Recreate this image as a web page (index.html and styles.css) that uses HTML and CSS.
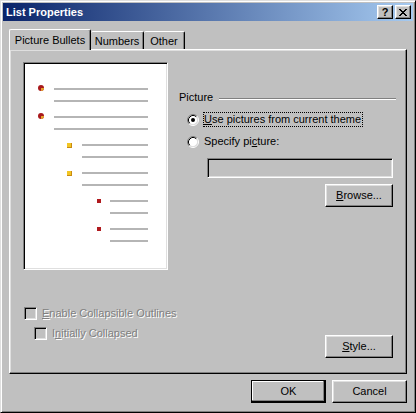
FILE: index.html
```html
<!DOCTYPE html>
<html>
<head>
<meta charset="utf-8">
<title>List Properties</title>
<link rel="stylesheet" href="styles.css">
</head>
<body>
<div class="window">
  <div class="titlebar">
    <span class="title">List Properties</span>
    <div class="title-buttons">
      <span class="tbtn help">?</span>
      <span class="tbtn close">
        <svg width="8" height="7" viewBox="0 0 8 7" shape-rendering="crispEdges"><path d="M0 0h2v1H0zM6 0h2v1H6zM1 1h2v1H1zM5 1h2v1H5zM2 2h4v1H2zM3 3h2v1H3zM2 4h4v1H2zM1 5h2v1H1zM5 5h2v1H5zM0 6h2v1H0zM6 6h2v1H6z" fill="#000"/></svg>
      </span>
    </div>
  </div>
  <div class="client">
    <div class="tabs">
      <div class="tab selected">Picture Bullets</div>
      <div class="tab tab-numbers">Numbers</div>
      <div class="tab tab-other">Other</div>
    </div>
    <div class="panel">
      <div class="top">
        <div class="preview">
          <div class="item lvl1">
            <svg class="bullet" width="6" height="6" viewBox="0 0 6 6"><circle cx="3" cy="3" r="3" fill="#a8191c"/><path d="M3 3H6A3 3 0 0 1 3 6Z" fill="#e4a22a"/></svg>
            <div class="lines"><div class="ln"></div><div class="ln"></div></div>
          </div>
          <div class="item lvl1">
            <svg class="bullet" width="6" height="6" viewBox="0 0 6 6"><circle cx="3" cy="3" r="3" fill="#a8191c"/><path d="M3 3H6A3 3 0 0 1 3 6Z" fill="#e4a22a"/></svg>
            <div class="lines"><div class="ln"></div><div class="ln"></div></div>
          </div>
          <div class="item lvl2">
            <svg class="bullet" width="5" height="5" viewBox="0 0 5 5" shape-rendering="crispEdges"><rect width="5" height="5" fill="#c98a12"/><rect width="4" height="4" fill="#f2c624"/></svg>
            <div class="lines"><div class="ln"></div><div class="ln"></div></div>
          </div>
          <div class="item lvl2">
            <svg class="bullet" width="5" height="5" viewBox="0 0 5 5" shape-rendering="crispEdges"><rect width="5" height="5" fill="#c98a12"/><rect width="4" height="4" fill="#f2c624"/></svg>
            <div class="lines"><div class="ln"></div><div class="ln"></div></div>
          </div>
          <div class="item lvl3">
            <svg class="bullet" width="4" height="4" viewBox="0 0 4 4" shape-rendering="crispEdges"><rect width="4" height="4" fill="#b01a1e"/></svg>
            <div class="lines"><div class="ln"></div><div class="ln"></div></div>
          </div>
          <div class="item lvl3">
            <svg class="bullet" width="4" height="4" viewBox="0 0 4 4" shape-rendering="crispEdges"><rect width="4" height="4" fill="#b01a1e"/></svg>
            <div class="lines"><div class="ln"></div><div class="ln"></div></div>
          </div>
        </div>
        <div class="picture-group">
          <div class="group-head"><span>Picture</span><span class="etch"></span></div>
          <div class="radio-row first">
            <svg class="radio" width="12" height="12" viewBox="0 0 12 12">
              <circle cx="6" cy="6" r="4.5" fill="#fff"/>
              <path d="M2.11 9.89A5.5 5.5 0 0 1 9.89 2.11" fill="none" stroke="#808080"/>
              <path d="M9.89 2.11A5.5 5.5 0 0 1 2.11 9.89" fill="none" stroke="#fff"/>
              <path d="M2.82 9.18A4.5 4.5 0 0 1 9.18 2.82" fill="none" stroke="#000"/>
              <path d="M9.18 2.82A4.5 4.5 0 0 1 2.82 9.18" fill="none" stroke="#dfdfdf"/>
              <circle cx="6" cy="6" r="2" fill="#000"/>
            </svg>
            <span class="label focus"><u>U</u>se pictures from current theme</span>
          </div>
          <div class="radio-row second">
            <svg class="radio" width="12" height="12" viewBox="0 0 12 12">
              <circle cx="6" cy="6" r="4.5" fill="#fff"/>
              <path d="M2.11 9.89A5.5 5.5 0 0 1 9.89 2.11" fill="none" stroke="#808080"/>
              <path d="M9.89 2.11A5.5 5.5 0 0 1 2.11 9.89" fill="none" stroke="#fff"/>
              <path d="M2.82 9.18A4.5 4.5 0 0 1 9.18 2.82" fill="none" stroke="#000"/>
              <path d="M9.18 2.82A4.5 4.5 0 0 1 2.82 9.18" fill="none" stroke="#dfdfdf"/>
            </svg>
            <span class="label">Specify pi<u>c</u>ture:</span>
          </div>
          <div class="textbox"></div>
          <div class="btn-row"><button class="btn small"><u>B</u>rowse...</button></div>
        </div>
      </div>
      <div class="bottom">
        <div class="checks">
          <div class="check"><span class="cbox"></span><span class="dis"><u>E</u>nable Collapsible Outlines</span></div>
          <div class="check sub"><span class="cbox"></span><span class="dis">I<u>n</u>itially Collapsed</span></div>
        </div>
        <button class="btn small style-btn"><u>S</u>tyle...</button>
      </div>
    </div>
    <div class="actions">
      <button class="btn wide default">OK</button>
      <button class="btn wide">Cancel</button>
    </div>
  </div>
</div>
</body>
</html>
```

FILE: styles.css
```css
html, body {
  margin: 0;
  padding: 0;
  background: #c0c0c0;
}

body {
  font: 11px "Liberation Sans", Arial, sans-serif;
  color: #000;
}

.window {
  width: 416px;
  height: 413px;
  box-sizing: border-box;
  background: #c0c0c0;
  border: 1px solid;
  border-color: #dfdfdf #000 #000 #dfdfdf;
  box-shadow: inset 1px 1px #fff, inset -1px -1px #808080;
  padding: 2px;
  display: flex;
  flex-direction: column;
}

.titlebar {
  height: 18px;
  flex: none;
  display: flex;
  align-items: center;
  padding-left: 3px;
  background: linear-gradient(to right, #0a246a, #a6caf0);
}

.title {
  flex: 1;
  color: #fff;
  font-weight: bold;
  font-size: 11px;
  line-height: 13px;
}

.title-buttons {
  display: flex;
  gap: 2px;
  margin-right: 2px;
}

.tbtn {
  width: 16px;
  height: 14px;
  box-sizing: border-box;
  background: #c0c0c0;
  border: 1px solid;
  border-color: #fff #000 #000 #fff;
  box-shadow: inset -1px -1px #808080, inset 1px 1px #dfdfdf;
  display: flex;
  align-items: center;
  justify-content: center;
}

.tbtn.help {
  font-weight: bold;
  font-size: 11px;
  line-height: 12px;
  color: #000;
}

.client {
  flex: 1;
  display: flex;
  flex-direction: column;
  padding: 8px 6px 7px 6px;
}

.tabs {
  height: 20px;
  display: flex;
  align-items: flex-end;
}

.tab {
  height: 18px;
  box-sizing: border-box;
  border-top: 1px solid #fff;
  border-left: 1px solid #fff;
  border-right: 1px solid #000;
  border-radius: 2px 2px 0 0;
  box-shadow: inset -1px 0 #808080;
  text-align: center;
  line-height: 16px;
  padding-top: 1px;
}

.tab.selected {
  width: 82px;
  height: 21px;
  margin-bottom: -1px;
  position: relative;
  z-index: 1;
  background: #c0c0c0;
  line-height: 16px;
  padding-top: 2px;
}

.tab-numbers {
  width: 53px;
  border-left: none;
}

.tab-other {
  width: 41px;
  border-left: none;
}

.panel {
  height: 325px;
  box-sizing: border-box;
  border: 1px solid;
  border-color: #fff #000 #000 #fff;
  box-shadow: inset -1px -1px #808080, inset 1px 1px #dfdfdf;
  padding: 12px 13px 0 13px;
  display: flex;
  flex-direction: column;
}

.top {
  display: flex;
  align-items: flex-start;
}

.preview {
  width: 145px;
  height: 208px;
  flex: none;
  box-sizing: border-box;
  background: #fff;
  border: 1px solid;
  border-color: #808080 #fff #fff #808080;
  box-shadow: inset 1px 1px #000, inset -1px -1px #dfdfdf;
  padding: 25px 19px 0 0;
}

.item {
  display: flex;
  align-items: flex-start;
  height: 28px;
}

.item.lvl1 { padding-left: 14px; }
.item.lvl2 { padding-left: 43px; }
.item.lvl3 { padding-left: 73px; }

.bullet { flex: none; display: block; }
.lvl1 .bullet { margin-top: -3px; margin-right: 10px; }
.lvl2 .bullet { margin-top: -1px; margin-right: 10px; }
.lvl3 .bullet { margin-top: -1px; margin-right: 9px; }

.lines {
  flex: 1;
}

.ln {
  height: 2px;
  background: #b5b5b5;
}

.ln + .ln {
  margin-top: 10px;
}

.picture-group {
  flex: 1;
  margin-left: 11px;
  margin-top: 29px;
}

.group-head {
  display: flex;
  align-items: center;
  height: 13px;
  line-height: 13px;
}

.etch {
  flex: 1;
  height: 0;
  margin-left: 6px;
  margin-right: -3px;
  margin-top: 2px;
  border-top: 1px solid #808080;
  border-bottom: 1px solid #fff;
}

.radio-row {
  display: flex;
  align-items: center;
  height: 15px;
  padding-left: 8px;
}

.radio-row.first { margin-top: 8px; }
.radio-row.second { margin-top: 7px; }

.radio {
  display: block;
  flex: none;
  margin-right: 4px;
}

.label {
  line-height: 13px;
  border: 1px dotted transparent;
  padding-right: 1px;
}

.label.focus {
  border-color: #000;
}

.textbox {
  height: 20px;
  margin: 9px 0 0 28px;
  box-sizing: border-box;
  background: #c0c0c0;
  border: 1px solid;
  border-color: #808080 #fff #fff #808080;
  box-shadow: inset 1px 1px #000, inset -1px -1px #dfdfdf;
}

.btn-row {
  display: flex;
  justify-content: flex-end;
  margin-top: 6px;
}

.btn {
  box-sizing: border-box;
  height: 23px;
  padding: 0;
  margin: 0;
  background: #c0c0c0;
  border: 1px solid;
  border-color: #fff #000 #000 #fff;
  box-shadow: inset -1px -1px #808080, inset 1px 1px #dfdfdf;
  font: 11px "Liberation Sans", Arial, sans-serif;
  color: #000;
  text-align: center;
  line-height: 19px;
}

.btn.small { width: 68px; }
.btn.wide { width: 75px; }

.btn.default {
  border-color: #000;
  box-shadow: inset -1px -1px #000, inset -2px -2px #808080, inset 1px 1px #fff;
}

.bottom {
  display: flex;
  justify-content: space-between;
  align-items: flex-start;
  margin-top: 37px;
}

.check {
  display: flex;
  align-items: center;
  height: 13px;
  margin-left: 1px;
}

.check.sub {
  margin-left: 11px;
  margin-top: 7px;
}

.cbox {
  width: 13px;
  height: 13px;
  flex: none;
  box-sizing: border-box;
  background: #c0c0c0;
  border: 1px solid;
  border-color: #808080 #fff #fff #808080;
  box-shadow: inset 1px 1px #000, inset -1px -1px #dfdfdf;
  margin-right: 5px;
}

.dis {
  color: #808080;
  text-shadow: 1px 1px 0 #fff;
  line-height: 13px;
}

.style-btn {
  margin-top: 28px;
}

.actions {
  display: flex;
  justify-content: flex-end;
  gap: 6px;
  margin-top: 6px;
}
```
